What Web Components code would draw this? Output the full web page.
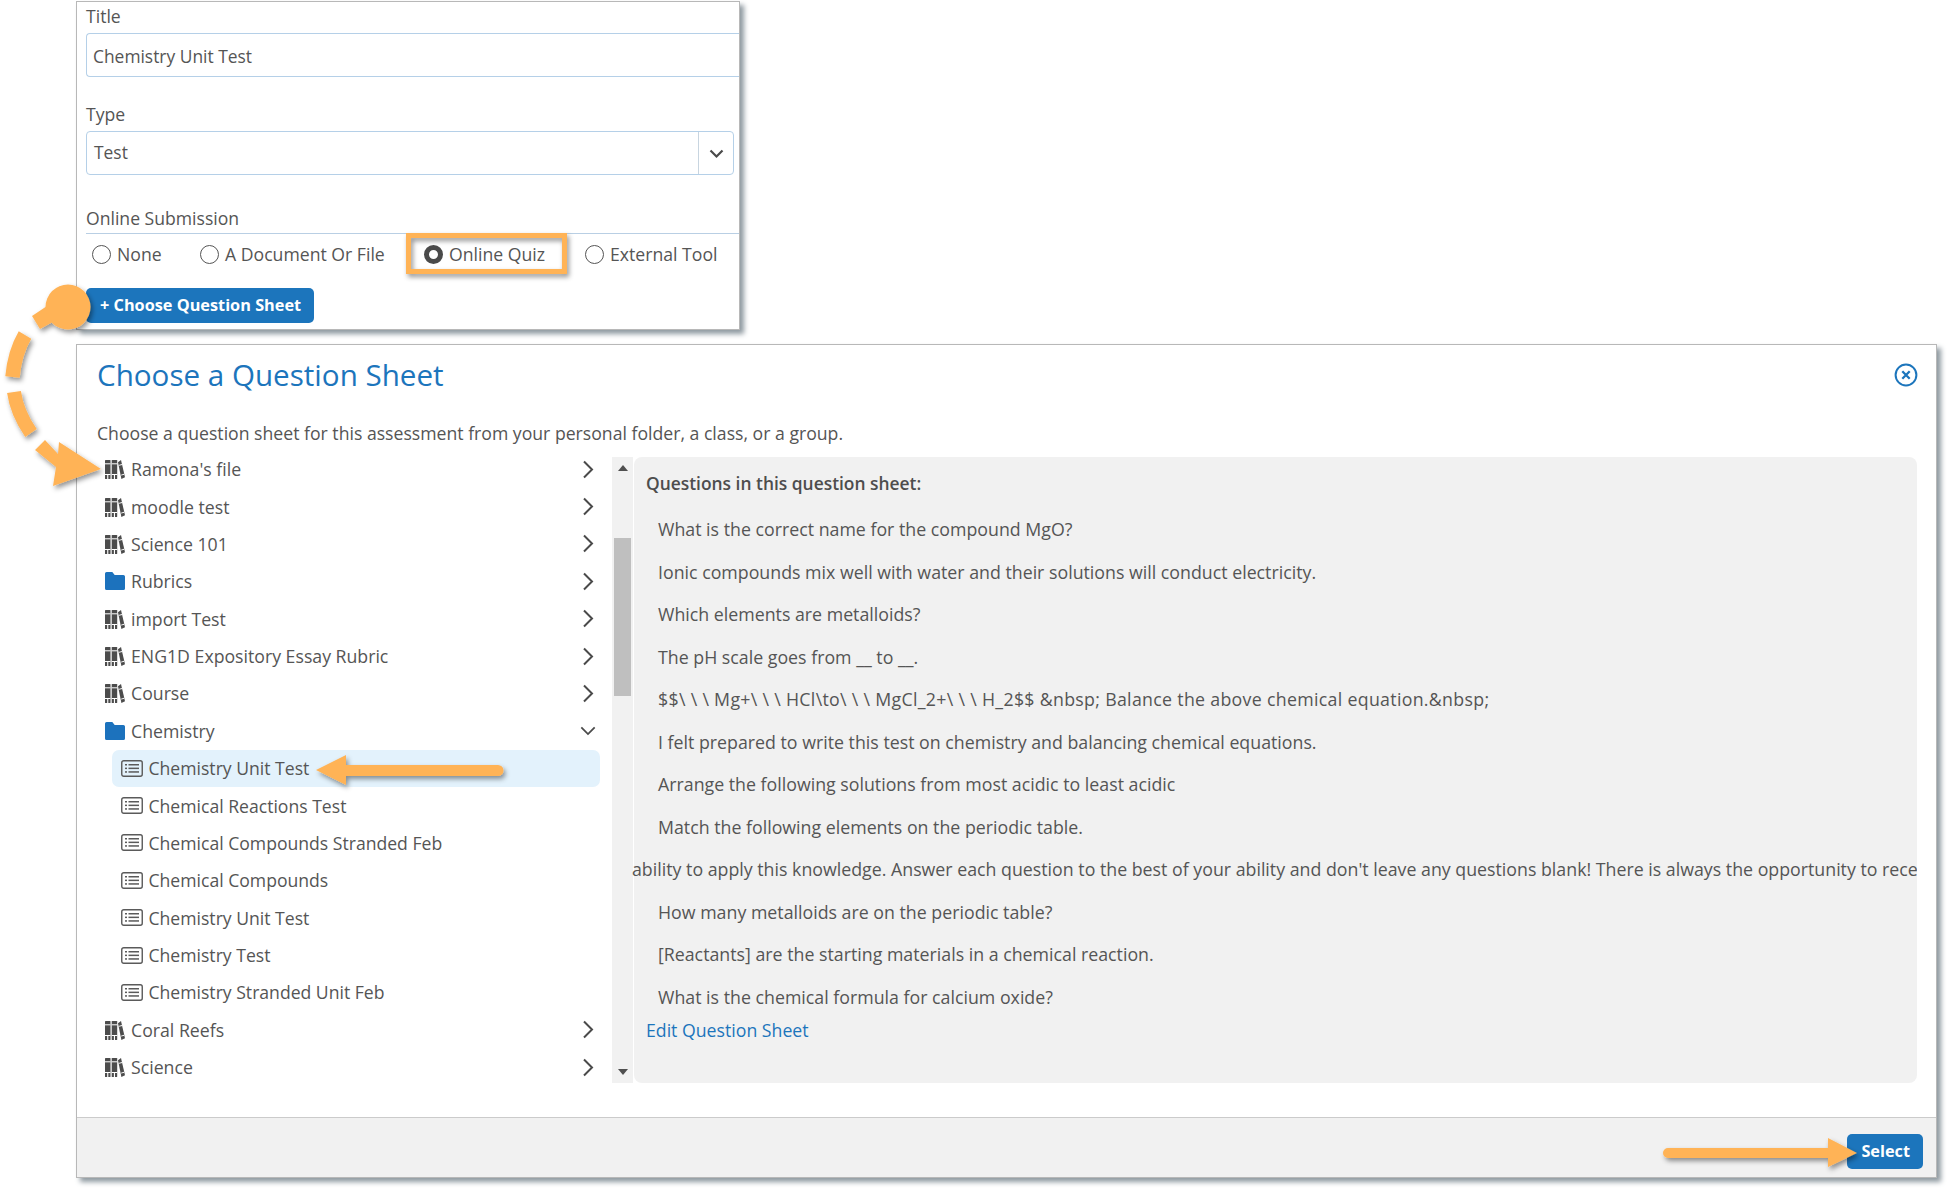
<!DOCTYPE html>
<html lang="en"><head><meta charset="utf-8"><title>Choose a Question Sheet</title>
<style>
html,body{margin:0;padding:0;background:#fff}
body{font-family:"Open Sans","Noto Sans",sans-serif;font-size:17.7px;color:#555}
</style></head><body>

<page-root>
  <form-panel>
    <field-label>Title</field-label>
    <text-input>Chemistry Unit Test</text-input>
    <field-label style="margin-top:24px">Type</field-label>
    <select-input>Test</select-input>
    <field-label style="margin-top:30px;padding-bottom:1px" rule>Online Submission</field-label>
    <radio-row>
      <radio-opt>None</radio-opt>
      <radio-opt>A Document Or File</radio-opt>
      <radio-opt checked>Online Quiz</radio-opt>
      <radio-opt>External Tool</radio-opt>
    </radio-row>
    <blue-button style="margin-top:14px">+ Choose Question Sheet</blue-button>
  </form-panel>

  <sheet-dialog heading="Choose a Question Sheet" intro="Choose a question sheet for this assessment from your personal folder, a class, or a group.">
    <tree-list slot="tree">
      <tree-row icon="books" chev="right">Ramona's file</tree-row>
      <tree-row icon="books" chev="right">moodle test</tree-row>
      <tree-row icon="books" chev="right">Science 101</tree-row>
      <tree-row icon="folder" chev="right">Rubrics</tree-row>
      <tree-row icon="books" chev="right">import Test</tree-row>
      <tree-row icon="books" chev="right">ENG1D Expository Essay Rubric</tree-row>
      <tree-row icon="books" chev="right">Course</tree-row>
      <tree-row icon="folder" chev="down">Chemistry</tree-row>
      <tree-row icon="list" selected>Chemistry Unit Test</tree-row>
      <tree-row icon="list">Chemical Reactions Test</tree-row>
      <tree-row icon="list">Chemical Compounds Stranded Feb</tree-row>
      <tree-row icon="list">Chemical Compounds</tree-row>
      <tree-row icon="list">Chemistry Unit Test</tree-row>
      <tree-row icon="list">Chemistry Test</tree-row>
      <tree-row icon="list">Chemistry Stranded Unit Feb</tree-row>
      <tree-row icon="books" chev="right">Coral Reefs</tree-row>
      <tree-row icon="books" chev="right">Science</tree-row>
    </tree-list>
    <scroll-bar slot="scroll"></scroll-bar>
    <question-panel slot="panel">
      <q-line>What is the correct name for the compound MgO?</q-line>
      <q-line>Ionic compounds mix well with water and their solutions will conduct electricity.</q-line>
      <q-line>Which elements are metalloids?</q-line>
      <q-line>The pH scale goes from __ to __.</q-line>
      <q-line style="letter-spacing:.3px">$$\ \ \ Mg+\ \ \ HCl\to\ \ \ MgCl_2+\ \ \ H_2$$ &amp;nbsp; Balance the above chemical equation.&amp;nbsp;</q-line>
      <q-line>I felt prepared to write this test on chemistry and balancing chemical equations.</q-line>
      <q-line>Arrange the following solutions from most acidic to least acidic</q-line>
      <q-line>Match the following elements on the periodic table.</q-line>
      <q-line overflow>ability to apply this knowledge. Answer each question to the best of your ability and don't leave any questions blank! There is always the opportunity to rece</q-line>
      <q-line>How many metalloids are on the periodic table?</q-line>
      <q-line>[Reactants] are the starting materials in a chemical reaction.</q-line>
      <q-line>What is the chemical formula for calcium oxide?</q-line>
    </question-panel>
    <blue-button slot="action">Select</blue-button>
  </sheet-dialog>
  <call-outs></call-outs>
</page-root>

<script>
function el(name, css, html){
  customElements.define(name, class extends HTMLElement{
    constructor(){super();this.attachShadow({mode:'open'});}
    connectedCallback(){
      const h = typeof html==='function'?html(this):html;
      this.shadowRoot.innerHTML='<style>'+css+'</style>'+h;
    }
  });
}
const ICONS={
 books:'<svg width="20" height="20" viewBox="0 0 20 20"><g fill="#4c4c4c"><rect x="0" y="1" width="5.500" height="19" rx=".6"/><rect x="6.700" y="1" width="5.500" height="19" rx=".6"/><path d="M13 3.200 16 1 20 18.200 16.400 20z"/></g><g fill="#fff"><rect x="0" y="4.300" width="5.500" height="1"/><rect x="6.700" y="4.300" width="5.500" height="1"/><rect x="0" y="15" width="5.500" height="1"/><rect x="6.700" y="15" width="5.500" height="1"/><rect x="2.200" y="16" width="1.100" height="4"/><rect x="8.900" y="16" width="1.100" height="4"/><path d="M13.600 5.900 17 5l.2.900-3.400.9zM16 15.700l3-.9.200.9-3 .9z"/></g></svg>',
 folder:'<svg width="20" height="18" viewBox="0 0 20 18"><path fill="#1c72bd" d="M1.600 0H7.300l2.400 3H18.400A1.600 1.600 0 0 1 20 4.600V16.400A1.600 1.600 0 0 1 18.400 18H1.600A1.600 1.600 0 0 1 0 16.400V1.600A1.600 1.600 0 0 1 1.600 0z"/></svg>',
 list:'<svg width="22" height="17" viewBox="0 0 22 17"><rect x=".75" y=".75" width="20.500" height="15.500" rx="2" fill="none" stroke="#5a5a5a" stroke-width="1.400"/><g fill="#5a5a5a"><rect x="4" y="4" width="2" height="1.500"/><rect x="4" y="7.600" width="2" height="1.500"/><rect x="4" y="11.200" width="2" height="1.500"/><rect x="7.500" y="4" width="10.500" height="1.500"/><rect x="7.500" y="7.600" width="10.500" height="1.500"/><rect x="7.500" y="11.200" width="10.500" height="1.500"/></g></svg>'
};
const CHEV={
 right:'<svg width="12" height="19" viewBox="0 0 12 19"><path d="M2 1.500 10 9.500 2 17.500" fill="none" stroke="#4a4a4a" stroke-width="2"/></svg>',
 down:'<svg width="18" height="12" viewBox="0 0 18 12"><path d="M1.500 2 9 9.500 16.500 2" fill="none" stroke="#4a4a4a" stroke-width="2"/></svg>'
};

el('page-root',':host{display:block;position:relative;width:1953px;height:1190px;overflow:hidden;padding:1px 0 0 76px;box-sizing:border-box}','<slot></slot>');

el('form-panel',`:host{display:block;box-sizing:border-box;width:664px;height:329px;background:#fff;border:1px solid #b8b8b8;border-left-width:1.5px;padding:1px 0 0 9px;box-shadow:4px 4px 5px #8f9aa1}`,'<slot></slot>');

el('field-label',`:host{display:block;height:30px;line-height:27px;font-size:17.600px;color:#555}
:host([rule]){border-bottom:1.5px solid #b9cfe4;height:27px}`,'<slot></slot>');

el('text-input',`:host{display:block;box-sizing:border-box;height:44px;border:1.5px solid #b5d0e8;border-right:0;border-radius:4px 0 0 4px;padding:0 6px;line-height:44px;font-size:17.400px;color:#555}`,'<slot></slot>');

el('select-input',`:host{display:flex;box-sizing:border-box;height:44px;width:648px;border:1.5px solid #b5d0e8;border-radius:4px}
.v{flex:1;padding:0 7px;line-height:41px;font-size:17.400px;color:#555;border-right:1.5px solid #c8d5e0}
.c{width:34px;display:flex;align-items:center;justify-content:center;padding-top:2px;box-sizing:border-box}`,
`<div class="v"><slot></slot></div><div class="c"><svg width="15" height="10" viewBox="0 0 15 10"><path d="M1.500 1.500 7.500 7.500 13.500 1.500" fill="none" stroke="#4a4a4a" stroke-width="2.200"/></svg></div>`);

el('radio-row',`:host{display:grid;grid-template-columns:108px 224px 161px auto;height:40px;align-items:center;padding-left:6px}`,'<slot></slot>');

el('radio-opt',`:host{display:flex;align-items:center;gap:6px;font-size:17.650px;color:#555;white-space:nowrap}
i{display:block;box-sizing:border-box;width:19px;height:19px;border-radius:50%;border:1.500px solid #555;background:#fff}
:host([checked]) i{border:5.500px solid #4a4a4a}`,`<i></i><slot></slot>`);

el('blue-button',`:host{display:inline-block;box-sizing:border-box;height:35px;padding:0 13px 0 14px;line-height:34px;background:#1c75bc;color:#fff;border-radius:5px;font-size:16.300px;font-weight:700;white-space:nowrap}`,'<slot></slot>');

el('sheet-dialog',`:host{display:flex;flex-direction:column;box-sizing:border-box;width:1861px;height:834px;margin-top:14px;background:#fff;border:1px solid #b8b8b8;border-left-width:1.500px;box-shadow:4px 4px 5px #8f9aa1}
header{display:flex;align-items:center;justify-content:space-between;box-sizing:border-box;height:62px;padding:0 18px 2px 20px}
h1{margin:0;font-size:29.600px;font-weight:400;color:#1c75bc;line-height:50px}
p{margin:0;padding:0 0 0 20px;height:43.500px;line-height:52px;font-size:17.650px;color:#555}
main{display:flex;height:632.500px;padding-left:9px}
.t{width:526px}
.s{width:22px;margin-top:6.500px}
.q{width:1283px;margin-top:6.500px}
footer{margin-top:auto;height:60px;box-sizing:border-box;border-top:1.500px solid #cbcbcb;background:#f1f1f1;display:flex;align-items:flex-start;justify-content:flex-end;padding:16px 13px 0 0}`,
h=>`<header><h1>${h.getAttribute('heading')}</h1>
<svg width="24" height="24" viewBox="0 0 24 24"><circle cx="12" cy="12" r="10.400" fill="none" stroke="#1c75bc" stroke-width="2"/><path d="M8.300 8.300l7.400 7.400M15.700 8.300l-7.400 7.400" stroke="#1c75bc" stroke-width="2.300"/></svg></header>
<p>${h.getAttribute('intro')}</p>
<main><div class="t"><slot name="tree"></slot></div><div class="s"><slot name="scroll"></slot></div><div class="q"><slot name="panel"></slot></div></main>
<footer><slot name="action"></slot></footer>`);

el('tree-list',`:host{display:block}`,'<slot></slot>');

el('tree-row',`:host{display:flex;align-items:center;box-sizing:border-box;height:37.380px;padding-left:19px;font-size:17.700px;color:#555;white-space:nowrap;position:relative;z-index:0}
:host([icon=list]){padding-left:35px;font-size:17.600px}
.ic{display:flex;width:26px;flex:none}
:host([icon=list]) .ic{width:27.500px}
.tx{flex:1}
.ch{position:absolute;left:494px;top:0;bottom:0;width:16px;display:flex;align-items:center;justify-content:center}
:host([selected])::before{content:"";position:absolute;left:26px;top:0;width:488px;height:100%;background:#e3f2fc;border-radius:7px;z-index:-1}`,
h=>`<span class="ic">${ICONS[h.getAttribute('icon')]}</span><span class="tx"><slot></slot></span>`+(h.getAttribute('chev')?`<span class="ch">${CHEV[h.getAttribute('chev')]}</span>`:''));

el('scroll-bar',`:host{display:flex;flex-direction:column;align-items:center;box-sizing:border-box;width:21px;height:626px;background:#f1f1f1}
.u{margin-top:8px;width:0;height:0;border:5px solid transparent;border-top:0;border-bottom:6px solid #4f4f4f}
.th{width:17px;height:158px;background:#bfbfbf;margin-top:67px}
.d{margin-top:auto;margin-bottom:8px;width:0;height:0;border:5px solid transparent;border-bottom:0;border-top:6px solid #4f4f4f}`,
`<div class="u"></div><div class="th"></div><div class="d"></div>`);

el('question-panel',`:host{display:block;box-sizing:border-box;height:626px;width:1283px;background:#f1f1f1;border-radius:8px;padding:11px 0 0 12px}
h2{margin:0;height:30px;line-height:30px;font-size:17.400px;font-weight:600;color:#4d4d4d}
.l{padding-top:10px}
a{display:block;line-height:24px;font-size:17.700px;color:#1c75bc;text-decoration:none}`,
`<h2>Questions in this question sheet:</h2><div class="l"><slot></slot></div><a href="#">Edit Question Sheet</a>`);

el('q-line',`:host{display:block;height:42.500px;line-height:42.500px;padding-left:12px;font-size:17.770px;color:#555;white-space:nowrap;box-sizing:border-box}
:host([overflow]){margin-left:-14px;padding-left:0;width:1285px;overflow:hidden}`,'<slot></slot>');

el('call-outs',`:host{position:absolute;left:0;top:0;width:1953px;height:1190px;pointer-events:none;display:block}
svg{display:block}`,
`<svg width="1953" height="1190" viewBox="0 0 1953 1190">
<defs><filter id="ds" x="-20%" y="-20%" width="150%" height="150%"><feDropShadow dx="2" dy="3" stdDeviation="2.500" flood-color="#000" flood-opacity=".42"/></filter></defs>
<g filter="url(#ds)" fill="#ffb357">
  <rect x="408.500" y="235.500" width="156" height="36" fill="none" stroke="#ffb357" stroke-width="5"/>
  <path d="M32 316 50 304 60 318 40 329 Z"/>
  <circle cx="68" cy="307" r="22.500"/>
  <path d="M25 335 C18 347 14 360 12.500 377" fill="none" stroke="#ffb357" stroke-width="14.500"/>
  <path d="M14 392 C16 406 22 420 31 433" fill="none" stroke="#ffb357" stroke-width="14"/>
  <path d="M101 469 53 486 56 467 35 450 45 440 58 454 59 442Z"/>
  <path d="M316 770 346 755V765H498a5.500 5.500 0 0 1 0 11H346V785Z"/>
  <path d="M1857 1153 1828 1138V1148H1668a5 5 0 0 0 0 10H1828V1167Z"/>
</g></svg>`);
</script>
</body></html>
